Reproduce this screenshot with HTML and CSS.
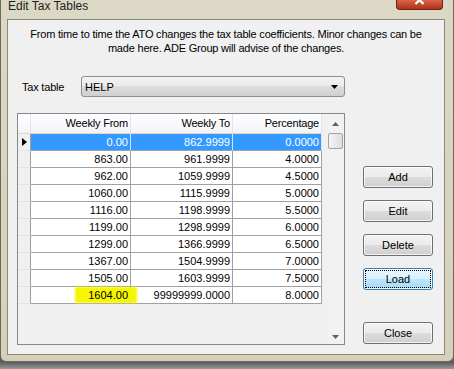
FILE: index.html
```html
<!DOCTYPE html>
<html lang="en">
<head>
    <meta charset="UTF-8">
    <title>Edit Tax Tables</title>
    <link rel="stylesheet" href="styles.css">
</head>
<body>
    <div class="window">
        <div class="titlebar">
            <span class="title">Edit Tax Tables</span>
            <span class="close-btn">
                <svg width="47" height="10" viewBox="0 0 47 10">
                    <path d="M19.5 -3 L27.5 5 M27.5 -3 L19.5 5" stroke="#fff" stroke-width="2.2" fill="none"/>
                </svg>
            </span>
        </div>

        <div class="client">
            <p class="intro">From time to time the ATO changes the tax table coefficients. Minor changes can be<br>made here. ADE Group will advise of the changes.</p>

            <div class="table-select">
                <label class="field-label">Tax table</label>
                <div class="combo">
                    <span>HELP</span>
                    <svg class="combo-arrow" width="7" height="4" viewBox="0 0 7 4">
                        <path d="M0 0 H7 L3.5 4 Z" fill="#000"/>
                    </svg>
                </div>
            </div>

            <div class="main">
                <div class="grid">
                    <div class="grid-rows">
                        <div class="row header">
                            <div class="cell ind"></div>
                            <div class="cell">Weekly From</div>
                            <div class="cell">Weekly To</div>
                            <div class="cell">Percentage</div>
                        </div>
                        <div class="row selected">
                            <div class="cell ind"><span class="pointer"></span></div>
                            <div class="cell">0.00</div>
                            <div class="cell">862.9999</div>
                            <div class="cell">0.0000</div>
                        </div>
                        <div class="row">
                            <div class="cell ind"></div>
                            <div class="cell">863.00</div>
                            <div class="cell">961.9999</div>
                            <div class="cell">4.0000</div>
                        </div>
                        <div class="row">
                            <div class="cell ind"></div>
                            <div class="cell">962.00</div>
                            <div class="cell">1059.9999</div>
                            <div class="cell">4.5000</div>
                        </div>
                        <div class="row">
                            <div class="cell ind"></div>
                            <div class="cell">1060.00</div>
                            <div class="cell">1115.9999</div>
                            <div class="cell">5.0000</div>
                        </div>
                        <div class="row">
                            <div class="cell ind"></div>
                            <div class="cell">1116.00</div>
                            <div class="cell">1198.9999</div>
                            <div class="cell">5.5000</div>
                        </div>
                        <div class="row">
                            <div class="cell ind"></div>
                            <div class="cell">1199.00</div>
                            <div class="cell">1298.9999</div>
                            <div class="cell">6.0000</div>
                        </div>
                        <div class="row">
                            <div class="cell ind"></div>
                            <div class="cell">1299.00</div>
                            <div class="cell">1366.9999</div>
                            <div class="cell">6.5000</div>
                        </div>
                        <div class="row">
                            <div class="cell ind"></div>
                            <div class="cell">1367.00</div>
                            <div class="cell">1504.9999</div>
                            <div class="cell">7.0000</div>
                        </div>
                        <div class="row">
                            <div class="cell ind"></div>
                            <div class="cell">1505.00</div>
                            <div class="cell">1603.9999</div>
                            <div class="cell">7.5000</div>
                        </div>
                        <div class="row">
                            <div class="cell ind"></div>
                            <div class="cell marked"><span class="highlight"></span><span class="value">1604.00</span></div>
                            <div class="cell">99999999.0000</div>
                            <div class="cell">8.0000</div>
                        </div>
                    </div>

                    <div class="scrollbar">
                        <div class="scroll-arrow">
                            <svg width="7" height="4" viewBox="0 0 7 4"><path d="M0 4 H7 L3.5 0 Z" fill="#606060"/></svg>
                        </div>
                        <div class="scroll-thumb"></div>
                        <div class="scroll-track"></div>
                        <div class="scroll-arrow">
                            <svg width="7" height="4" viewBox="0 0 7 4"><path d="M0 0 H7 L3.5 4 Z" fill="#606060"/></svg>
                        </div>
                    </div>
                </div>

                <div class="buttons">
                    <button class="btn">Add</button>
                    <button class="btn">Edit</button>
                    <button class="btn">Delete</button>
                    <button class="btn btn-focus">Load</button>
                    <button class="btn btn-close">Close</button>
                </div>
            </div>
        </div>
    </div>
</body>
</html>
```

FILE: styles.css
```css
* {
    margin: 0;
    padding: 0;
    box-sizing: border-box;
}

body {
    width: 454px;
    height: 369px;
    overflow: hidden;
    font-family: "Liberation Sans", Arial, sans-serif;
    font-size: 11px;
    color: #000;
    background: linear-gradient(to bottom, #5a5a5a 0, #5a5a5a 362px, #9a9a9a 369px);
}

.window {
    width: 454px;
    height: 362px;
    display: flex;
    flex-direction: column;
    padding: 0 8px 6px 6px;
    background: linear-gradient(to bottom, #dcd8c6 0, #d6d0bb 100%);
    border: 1px solid #6e6a5a;
    border-top: none;
    border-radius: 0 0 6px 6px;
}

/* title bar */

.titlebar {
    height: 19px;
    display: flex;
    justify-content: space-between;
    align-items: flex-start;
}

.title {
    font-size: 12px;
    line-height: 13px;
    padding-left: 1px;
    color: #1e1e1e;
}

.close-btn {
    display: block;
    width: 47px;
    height: 10px;
    margin-right: 2px;
    background: linear-gradient(to bottom, #d9664c 0, #c2432a 60%, #b0341c 100%);
    border: 1px solid #6b2212;
    border-top: none;
    border-radius: 0 0 4px 4px;
    overflow: hidden;
}

.close-btn svg {
    display: block;
    margin: -1px 0 0 -1px;
}

/* client area */

.client {
    flex: 1;
    display: flex;
    flex-direction: column;
    background-color: #f0f0f0;
    border: 1px solid #8c8876;
    padding: 7px 0 9px 0;
}

.intro {
    text-align: center;
    line-height: 14px;
    height: 28px;
    letter-spacing: -0.2px;
}

.table-select {
    display: flex;
    align-items: center;
    margin-top: 21px;
    padding-left: 14px;
}

.field-label {
    width: 59px;
    letter-spacing: -0.2px;
}

.combo {
    width: 264px;
    height: 21px;
    display: flex;
    align-items: center;
    justify-content: space-between;
    padding: 0 6px 0 3px;
    border: 1px solid #8e8f8f;
    border-radius: 3px;
    background: linear-gradient(to bottom, #f2f2f2 0, #ebebeb 50%, #dddddd 50%, #cfcfcf 100%);
    font-size: 11px;
}

.main {
    display: flex;
    margin-top: 16px;
    padding-left: 9px;
}

/* data grid */

.grid {
    width: 328px;
    height: 232px;
    display: flex;
    border: 1px solid #828790;
    background-color: #f0f0f0;
}

.grid-rows {
    width: 309px;
}

.row {
    display: grid;
    grid-template-columns: 13px 100px 102px 89px;
    height: 17px;
    background-color: #fff;
    width: 304px;
}

.cell {
    border-right: 1px solid #a0a0a0;
    border-bottom: 1px solid #a0a0a0;
    text-align: right;
    padding-right: 2px;
    line-height: 16px;
    white-space: nowrap;
}

.cell.ind {
    background-color: #f0f0f0;
    border-bottom-color: #e4e4e4;
    border-right-color: #a0a0a0;
    padding: 0;
    display: flex;
    align-items: center;
    justify-content: center;
}

.row.header {
    height: 20px;
    background: linear-gradient(to bottom, #ffffff 0, #f7f8fa 60%, #f1f2f4 100%);
    letter-spacing: -0.2px;
}

.row.header .cell {
    border-right-color: #e3e4e6;
    border-bottom-color: #e8d2c4;
    line-height: 19px;
}

.row.header .cell.ind {
    background: transparent;
}

.row.selected .cell {
    background-color: #3399ff;
    color: #fff;
    border-right-color: #d2e6fa;
}

.row.selected .cell.ind {
    background-color: #f0f0f0;
    border-right-color: #a0a0a0;
}

.pointer {
    width: 0;
    height: 0;
    border-left: 5px solid #000;
    border-top: 4.5px solid transparent;
    border-bottom: 4.5px solid transparent;
}

.cell.marked {
    position: relative;
}

.highlight {
    position: absolute;
    left: 44px;
    top: 0;
    width: 62px;
    height: 16px;
    background-color: #f6f600;
    filter: blur(0.8px);
}

.value {
    position: relative;
}

/* scrollbar */

.scrollbar {
    width: 17px;
    margin-left: 1px;
    display: flex;
    flex-direction: column;
    align-items: center;
    background-color: #f2f2f2;
}

.scroll-arrow {
    height: 17px;
    display: flex;
    align-items: center;
    justify-content: center;
    padding-top: 2px;
}

.scroll-thumb {
    width: 15px;
    height: 16px;
    margin-top: 2px;
    border: 1px solid #a3a3a3;
    border-radius: 2px;
    background: linear-gradient(to right, #f5f5f5 0, #e8e8e8 50%, #dcdcdc 100%);
}

.scroll-track {
    flex: 1;
}

/* buttons */

.buttons {
    display: flex;
    flex-direction: column;
    gap: 12px;
    margin-left: 18px;
    padding-top: 53px;
    padding-bottom: 1px;
}

.btn {
    width: 70px;
    height: 22px;
    border: 1px solid #707070;
    border-radius: 3px;
    background: linear-gradient(to bottom, #f2f2f2 0, #ebebeb 50%, #dddddd 50%, #cfcfcf 100%);
    box-shadow: inset 0 0 0 1px rgba(255, 255, 255, 0.75);
    font-family: "Liberation Sans", Arial, sans-serif;
    font-size: 11px;
    color: #000;
}

.btn-focus {
    border-color: #3c7fb1;
    background: linear-gradient(to bottom, #eaf6fd 0, #d9f0fc 50%, #bee6fd 50%, #a7d9f5 100%);
    outline: 1px dotted #000;
    outline-offset: -3px;
}

.btn-close {
    margin-top: auto;
}
```
